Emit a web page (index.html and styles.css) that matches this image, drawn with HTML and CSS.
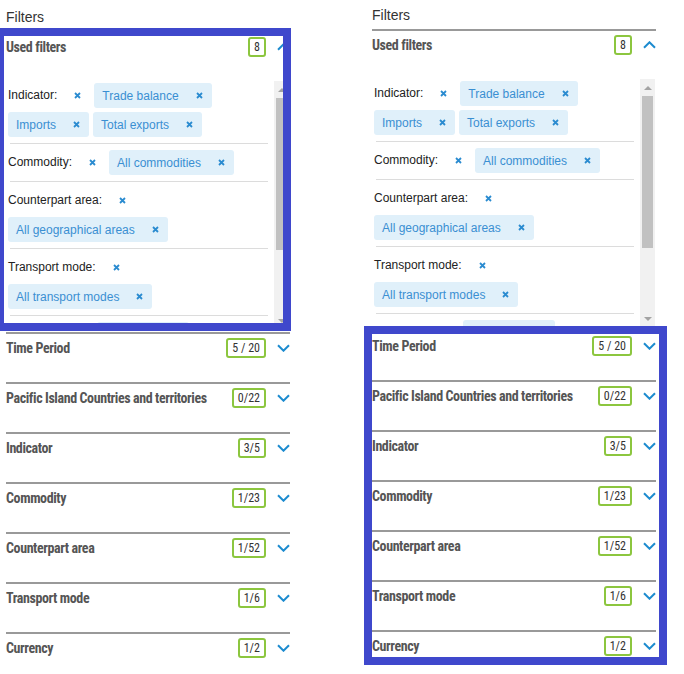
FILE: index.html
```html
<!DOCTYPE html>
<html lang="en">
<head>
<meta charset="utf-8">
<title>Filters</title>
<link rel="stylesheet" href="styles.css">
</head>
<body>
<div class="page">
  <section class="panel panel-left">
    <div class="panel-title">Filters</div>
    <div class="acc acc-open">
      <div class="acc-head"><span class="acc-name">Used filters</span><span class="badge">8</span><svg class="chev" viewBox="0 0 13 8"><path d="M1 6.8L6.5 1.3L12 6.8"/></svg></div>
      <div class="used">
        <div class="used-list">
          <div class="grp grp-first"><div class="grp-items">
            <span class="lbl">Indicator:</span><svg class="x" viewBox="0 0 7 7"><path d="M1 1L6 6M6 1L1 6"/></svg>
            <span class="chip">Trade balance<svg class="x" viewBox="0 0 7 7"><path d="M1 1L6 6M6 1L1 6"/></svg></span>
            <span class="chip">Imports<svg class="x" viewBox="0 0 7 7"><path d="M1 1L6 6M6 1L1 6"/></svg></span>
            <span class="chip">Total exports<svg class="x" viewBox="0 0 7 7"><path d="M1 1L6 6M6 1L1 6"/></svg></span>
          </div></div>
          <div class="grp"><div class="grp-items">
            <span class="lbl">Commodity:</span><svg class="x" viewBox="0 0 7 7"><path d="M1 1L6 6M6 1L1 6"/></svg>
            <span class="chip">All commodities<svg class="x" viewBox="0 0 7 7"><path d="M1 1L6 6M6 1L1 6"/></svg></span>
          </div></div>
          <div class="grp"><div class="grp-items">
            <span class="lbl">Counterpart area:</span><svg class="x" viewBox="0 0 7 7"><path d="M1 1L6 6M6 1L1 6"/></svg>
            <span class="chip">All geographical areas<svg class="x" viewBox="0 0 7 7"><path d="M1 1L6 6M6 1L1 6"/></svg></span>
          </div></div>
          <div class="grp"><div class="grp-items">
            <span class="lbl">Transport mode:</span><svg class="x" viewBox="0 0 7 7"><path d="M1 1L6 6M6 1L1 6"/></svg>
            <span class="chip">All transport modes<svg class="x" viewBox="0 0 7 7"><path d="M1 1L6 6M6 1L1 6"/></svg></span>
          </div></div>
          <div class="grp"><div class="grp-items">
            <span class="lbl">Currency:</span><svg class="x" viewBox="0 0 7 7"><path d="M1 1L6 6M6 1L1 6"/></svg>
            <span class="chip">US Dollar<svg class="x" viewBox="0 0 7 7"><path d="M1 1L6 6M6 1L1 6"/></svg></span>
          </div></div>
        </div>
        <div class="sbar"><div class="sb-btn sb-up"></div><div class="sb-track"><div class="sb-thumb"></div></div><div class="sb-btn sb-down"></div></div>
      </div>
    </div>
    <div class="acc"><div class="acc-head"><span class="acc-name">Time Period</span><span class="badge">5 / 20</span><svg class="chev" viewBox="0 0 13 8"><path d="M1 1.2L6.5 6.7L12 1.2"/></svg></div></div>
    <div class="acc"><div class="acc-head"><span class="acc-name">Pacific Island Countries and territories</span><span class="badge">0/22</span><svg class="chev" viewBox="0 0 13 8"><path d="M1 1.2L6.5 6.7L12 1.2"/></svg></div></div>
    <div class="acc"><div class="acc-head"><span class="acc-name">Indicator</span><span class="badge">3/5</span><svg class="chev" viewBox="0 0 13 8"><path d="M1 1.2L6.5 6.7L12 1.2"/></svg></div></div>
    <div class="acc"><div class="acc-head"><span class="acc-name">Commodity</span><span class="badge">1/23</span><svg class="chev" viewBox="0 0 13 8"><path d="M1 1.2L6.5 6.7L12 1.2"/></svg></div></div>
    <div class="acc"><div class="acc-head"><span class="acc-name">Counterpart area</span><span class="badge">1/52</span><svg class="chev" viewBox="0 0 13 8"><path d="M1 1.2L6.5 6.7L12 1.2"/></svg></div></div>
    <div class="acc"><div class="acc-head"><span class="acc-name">Transport mode</span><span class="badge">1/6</span><svg class="chev" viewBox="0 0 13 8"><path d="M1 1.2L6.5 6.7L12 1.2"/></svg></div></div>
    <div class="acc"><div class="acc-head"><span class="acc-name">Currency</span><span class="badge">1/2</span><svg class="chev" viewBox="0 0 13 8"><path d="M1 1.2L6.5 6.7L12 1.2"/></svg></div></div>
  </section>

  <section class="panel panel-right">
    <div class="panel-title">Filters</div>
    <div class="acc acc-open">
      <div class="acc-head"><span class="acc-name">Used filters</span><span class="badge">8</span><svg class="chev" viewBox="0 0 13 8"><path d="M1 6.8L6.5 1.3L12 6.8"/></svg></div>
      <div class="used">
        <div class="used-list">
          <div class="grp grp-first"><div class="grp-items">
            <span class="lbl">Indicator:</span><svg class="x" viewBox="0 0 7 7"><path d="M1 1L6 6M6 1L1 6"/></svg>
            <span class="chip">Trade balance<svg class="x" viewBox="0 0 7 7"><path d="M1 1L6 6M6 1L1 6"/></svg></span>
            <span class="chip">Imports<svg class="x" viewBox="0 0 7 7"><path d="M1 1L6 6M6 1L1 6"/></svg></span>
            <span class="chip">Total exports<svg class="x" viewBox="0 0 7 7"><path d="M1 1L6 6M6 1L1 6"/></svg></span>
          </div></div>
          <div class="grp"><div class="grp-items">
            <span class="lbl">Commodity:</span><svg class="x" viewBox="0 0 7 7"><path d="M1 1L6 6M6 1L1 6"/></svg>
            <span class="chip">All commodities<svg class="x" viewBox="0 0 7 7"><path d="M1 1L6 6M6 1L1 6"/></svg></span>
          </div></div>
          <div class="grp"><div class="grp-items">
            <span class="lbl">Counterpart area:</span><svg class="x" viewBox="0 0 7 7"><path d="M1 1L6 6M6 1L1 6"/></svg>
            <span class="chip">All geographical areas<svg class="x" viewBox="0 0 7 7"><path d="M1 1L6 6M6 1L1 6"/></svg></span>
          </div></div>
          <div class="grp"><div class="grp-items">
            <span class="lbl">Transport mode:</span><svg class="x" viewBox="0 0 7 7"><path d="M1 1L6 6M6 1L1 6"/></svg>
            <span class="chip">All transport modes<svg class="x" viewBox="0 0 7 7"><path d="M1 1L6 6M6 1L1 6"/></svg></span>
          </div></div>
          <div class="grp"><div class="grp-items">
            <span class="lbl">Currency:</span><svg class="x" viewBox="0 0 7 7"><path d="M1 1L6 6M6 1L1 6"/></svg>
            <span class="chip">US Dollar<svg class="x" viewBox="0 0 7 7"><path d="M1 1L6 6M6 1L1 6"/></svg></span>
          </div></div>
        </div>
        <div class="sbar"><div class="sb-btn sb-up"></div><div class="sb-track"><div class="sb-thumb"></div></div><div class="sb-btn sb-down"></div></div>
      </div>
    </div>
    <div class="acc"><div class="acc-head"><span class="acc-name">Time Period</span><span class="badge">5 / 20</span><svg class="chev" viewBox="0 0 13 8"><path d="M1 1.2L6.5 6.7L12 1.2"/></svg></div></div>
    <div class="acc"><div class="acc-head"><span class="acc-name">Pacific Island Countries and territories</span><span class="badge">0/22</span><svg class="chev" viewBox="0 0 13 8"><path d="M1 1.2L6.5 6.7L12 1.2"/></svg></div></div>
    <div class="acc"><div class="acc-head"><span class="acc-name">Indicator</span><span class="badge">3/5</span><svg class="chev" viewBox="0 0 13 8"><path d="M1 1.2L6.5 6.7L12 1.2"/></svg></div></div>
    <div class="acc"><div class="acc-head"><span class="acc-name">Commodity</span><span class="badge">1/23</span><svg class="chev" viewBox="0 0 13 8"><path d="M1 1.2L6.5 6.7L12 1.2"/></svg></div></div>
    <div class="acc"><div class="acc-head"><span class="acc-name">Counterpart area</span><span class="badge">1/52</span><svg class="chev" viewBox="0 0 13 8"><path d="M1 1.2L6.5 6.7L12 1.2"/></svg></div></div>
    <div class="acc"><div class="acc-head"><span class="acc-name">Transport mode</span><span class="badge">1/6</span><svg class="chev" viewBox="0 0 13 8"><path d="M1 1.2L6.5 6.7L12 1.2"/></svg></div></div>
    <div class="acc"><div class="acc-head"><span class="acc-name">Currency</span><span class="badge">1/2</span><svg class="chev" viewBox="0 0 13 8"><path d="M1 1.2L6.5 6.7L12 1.2"/></svg></div></div>
  </section>
</div>
<div class="hl hl-left"></div>
<div class="hl hl-right"></div>
</body>
</html>
```

FILE: styles.css
```css
* { box-sizing: border-box; }
html, body { margin: 0; height: 100%; overflow: hidden; background: #fff; }
body { font-family: "Liberation Sans", Arial, sans-serif; color: #222; }

.page { display: flex; align-items: flex-start; gap: 82px; padding-left: 6px; }
.panel { width: 284px; flex: none; }
.panel-left { margin-top: 2px; }

.panel-title { padding: 7px 0 6px; font-size: 14px; line-height: 16px; color: #333; }

.acc { border-top: 2px solid #999; padding-bottom: 20px; }
.acc-open { padding-bottom: 4px; }
.acc-head { display: flex; align-items: center; height: 28px; }
.acc-name {
  flex: 1; min-width: 0; white-space: nowrap;
  font-family: "Roboto Condensed", "Open Sans", "Noto Sans", sans-serif;
  font-stretch: 75%;
  font-weight: 700; font-size: 14px; letter-spacing: -0.4px; color: #555;
}
.badge {
  height: 20px; padding: 0 4px; margin-right: 11px;
  border: 2px solid #8cc63f; border-radius: 3px;
  font-family: "Roboto Condensed", "Open Sans", "Noto Sans", sans-serif;
  font-stretch: 75%;
  font-size: 12px; line-height: 16px; color: #333; white-space: nowrap;
}
.chev { display: block; width: 13px; height: 8px; flex: none; }
.chev path { fill: none; stroke: #1c8bcf; stroke-width: 2; }

.used { display: flex; height: 247px; margin: 20px 1px 0 0; overflow: hidden; }
.used-list { flex: 1; min-width: 0; overflow: hidden; }
.grp { padding: 6px 4px 0 2px; }
.grp-first { padding-top: 2px; }
.grp::after { content: ""; display: block; height: 1px; margin: 6px 2px 0; background: #dcdcdc; }
.grp-items { display: flex; flex-wrap: wrap; align-items: center; gap: 4px; }
.lbl { font-size: 12px; line-height: 25px; color: #222; margin-right: 13px; white-space: nowrap; }
.x { display: block; width: 7px; height: 7px; flex: none; margin-right: 9px; }
.x path { stroke: #2a8bd0; stroke-width: 1.8; fill: none; }
.chip {
  display: inline-flex; align-items: center; height: 25px; padding: 0 9px 0 8px;
  background: #e0f0fa; border-radius: 3px; font-size: 12px; color: #3a8fd2; white-space: nowrap;
}
.chip .x { margin: 0 0 0 17px; }

.sbar { width: 15px; flex: none; display: flex; flex-direction: column; background: #f1f1f1; }
.sb-btn { height: 17px; flex: none; display: flex; align-items: center; justify-content: center; }
.sb-up::before { content: ""; border: 4px solid transparent; border-top: 0; border-bottom: 4px solid #a3a3a3; }
.sb-down { height: 15px; }
.sb-down::before { content: ""; border: 4px solid transparent; border-bottom: 0; border-top: 4px solid #a3a3a3; }
.sb-track { flex: 1; }
.sb-thumb { height: 152px; margin: 0 2px; background: #c1c1c1; }

.hl { position: absolute; border: 8px solid #3f48cc; pointer-events: none; }
.hl-left { left: -4px; top: 28px; width: 295px; height: 303px; }
.hl-right { left: 364px; top: 326px; width: 303px; height: 339px; }
```
